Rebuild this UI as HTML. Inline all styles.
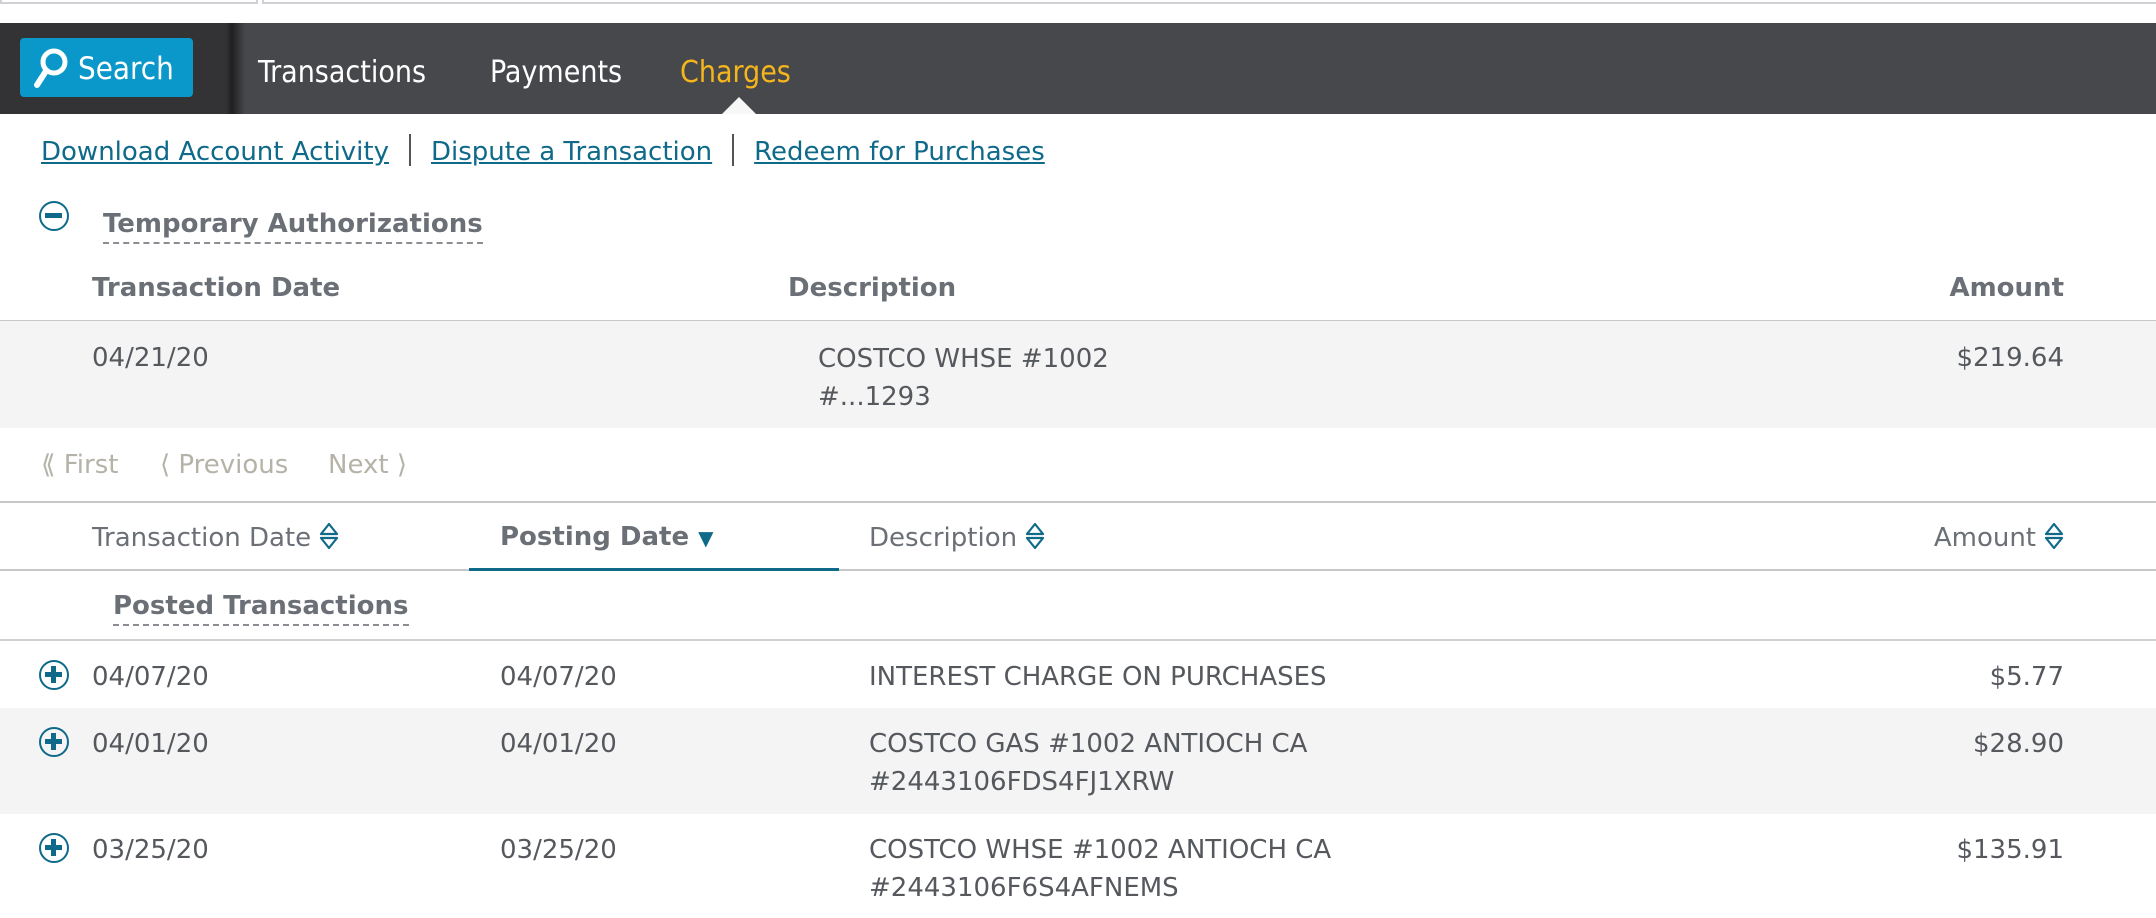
<!DOCTYPE html>
<html><head><meta charset="utf-8"><style>
*{margin:0;padding:0;box-sizing:border-box}
body{width:2156px;height:918px;overflow:hidden;background:#fff;font-family:"DejaVu Sans","Liberation Sans",sans-serif;position:relative;color:#55585d}
.a{position:absolute;white-space:nowrap}
.nav{position:absolute;left:0;top:23px;width:2156px;height:91px;background:#47484c}
.navl{position:absolute;left:0;top:0;width:245px;height:91px;background:linear-gradient(to right,#333335 0,#333335 226px,#1f1f20 232px,#47484c 245px)}
.btn{position:absolute;left:20px;top:15px;width:173px;height:59px;background:#0a97c9;border-radius:4px}
.nt{position:absolute;top:32px;font-size:30px;color:#fff;font-family:"DejaVu Sans Condensed","DejaVu Sans",sans-serif}
.links{position:absolute;left:41px;top:134px;font-size:26px;white-space:nowrap}
.links a{color:#0f6a8a;text-decoration:underline}
.links i{display:inline-block;width:2px;height:32px;background:#555;vertical-align:-6px;margin:0 20px 0 20px}
.hd{font-weight:bold;color:#6b6f76;font-size:26px}
.hl{position:absolute;left:0;width:2156px;height:2px;background:#c8c8c8}
.tx{font-size:26px;color:#55585d}
.ml{line-height:38px}
.dash{border-bottom:2px dashed #8a8d92;padding-bottom:3px}
.pg{color:#b5b3a8;font-size:26px;top:450px}
.circ{position:absolute;width:30px;height:30px;border:2.5px solid #0f6a8a;border-radius:50%}
.circ:before{content:"";position:absolute;left:4px;top:10px;width:17px;height:5px;background:#0f6a8a}
.plus:after{content:"";position:absolute;left:10px;top:4px;width:5px;height:17px;background:#0f6a8a}
.srt{display:inline-block;vertical-align:-4px;margin-left:8px}
</style></head><body>
<div class="a" style="left:0;top:0;width:258px;height:4px;border-right:2px solid #d0d0d5;border-left:2px solid #d0d0d5;border-bottom:2px solid #d0d0d5"></div>
<div class="a" style="left:262px;top:0;width:1894px;height:4px;border-left:2px solid #d0d0d5;border-bottom:2px solid #d0d0d5"></div>
<div class="nav">
<div class="navl"></div>
<div class="btn">
<svg width="40" height="46" style="position:absolute;left:10px;top:7px" viewBox="0 0 40 46"><circle cx="24" cy="17" r="11" fill="none" stroke="#fff" stroke-width="5"/><line x1="16" y1="26" x2="7" y2="40" stroke="#fff" stroke-width="6" stroke-linecap="round"/></svg>
<div class="nt" style="left:58px;top:13px;font-size:31px">Search</div>
</div>
<div class="nt" style="left:258px">Transactions</div>
<div class="nt" style="left:490px">Payments</div>
<div class="nt" style="left:680px;color:#f5b51b">Charges</div>
<div class="a" style="left:722px;top:74px;width:0;height:0;border-left:17px solid transparent;border-right:17px solid transparent;border-bottom:17px solid #f7f7f7"></div>
</div>
<div class="links"><a>Download Account Activity</a><i></i><a>Dispute a Transaction</a><i></i><a>Redeem for Purchases</a></div>
<div class="circ" style="left:39px;top:201px"></div>
<div class="a hd dash" style="left:103px;top:209px">Temporary Authorizations</div>
<div class="a hd" style="left:92px;top:273px">Transaction Date</div>
<div class="a hd" style="left:788px;top:273px">Description</div>
<div class="a hd" style="right:92px;top:273px">Amount</div>
<div class="hl" style="top:320px;height:1px"></div>
<div class="a" style="left:0;top:321px;width:2156px;height:107px;background:#f4f4f4"></div>
<div class="a tx" style="left:92px;top:343px">04/21/20</div>
<div class="a tx ml" style="left:818px;top:340px">COSTCO WHSE #1002<br>#...1293</div>
<div class="a tx" style="right:92px;top:343px">$219.64</div>
<div class="a pg" style="left:41px">&#10218; First</div>
<div class="a pg" style="left:160px">&#10216; Previous</div>
<div class="a pg" style="left:328px">Next &#10217;</div>
<div class="hl" style="top:501px"></div>
<svg width="0" height="0" style="position:absolute"><defs><symbol id="s" viewBox="0 0 20 28"><path d="M10 2 L18 12 L2 12 Z M10 26 L18 16 L2 16 Z" fill="none" stroke="#0f6a8a" stroke-width="2.2" stroke-linejoin="round"/></symbol></defs></svg>
<div class="a tx" style="left:92px;top:522px;color:#6b6f76">Transaction Date<svg class="srt" width="20" height="28"><use href="#s"/></svg></div>
<div class="a hd" style="left:500px;top:522px">Posting Date <span style="color:#0f6a8a;font-size:20px">&#9660;</span></div>
<div class="a tx" style="left:869px;top:522px;color:#6b6f76">Description<svg class="srt" width="20" height="28"><use href="#s"/></svg></div>
<div class="a tx" style="right:92px;top:522px;color:#6b6f76">Amount<svg class="srt" width="20" height="28"><use href="#s"/></svg></div>
<div class="hl" style="top:569px"></div>
<div class="a" style="left:469px;top:568px;width:370px;height:3px;background:#0f6a8a"></div>
<div class="a hd dash" style="left:113px;top:591px">Posted Transactions</div>
<div class="hl" style="top:639px;background:#d0d0d5"></div>
<div class="a" style="left:0;top:708px;width:2156px;height:106px;background:#f4f4f4"></div>
<div class="circ plus" style="left:39px;top:660px"></div>
<div class="a tx" style="left:92px;top:662px">04/07/20</div>
<div class="a tx" style="left:500px;top:662px">04/07/20</div>
<div class="a tx" style="left:869px;top:662px">INTEREST CHARGE ON PURCHASES</div>
<div class="a tx" style="right:92px;top:662px">$5.77</div>
<div class="circ plus" style="left:39px;top:727px"></div>
<div class="a tx" style="left:92px;top:729px">04/01/20</div>
<div class="a tx" style="left:500px;top:729px">04/01/20</div>
<div class="a tx ml" style="left:869px;top:725px">COSTCO GAS #1002 ANTIOCH CA<br>#2443106FDS4FJ1XRW</div>
<div class="a tx" style="right:92px;top:729px">$28.90</div>
<div class="circ plus" style="left:39px;top:833px"></div>
<div class="a tx" style="left:92px;top:835px">03/25/20</div>
<div class="a tx" style="left:500px;top:835px">03/25/20</div>
<div class="a tx ml" style="left:869px;top:831px">COSTCO WHSE #1002 ANTIOCH CA<br>#2443106F6S4AFNEMS</div>
<div class="a tx" style="right:92px;top:835px">$135.91</div>
</body></html>
